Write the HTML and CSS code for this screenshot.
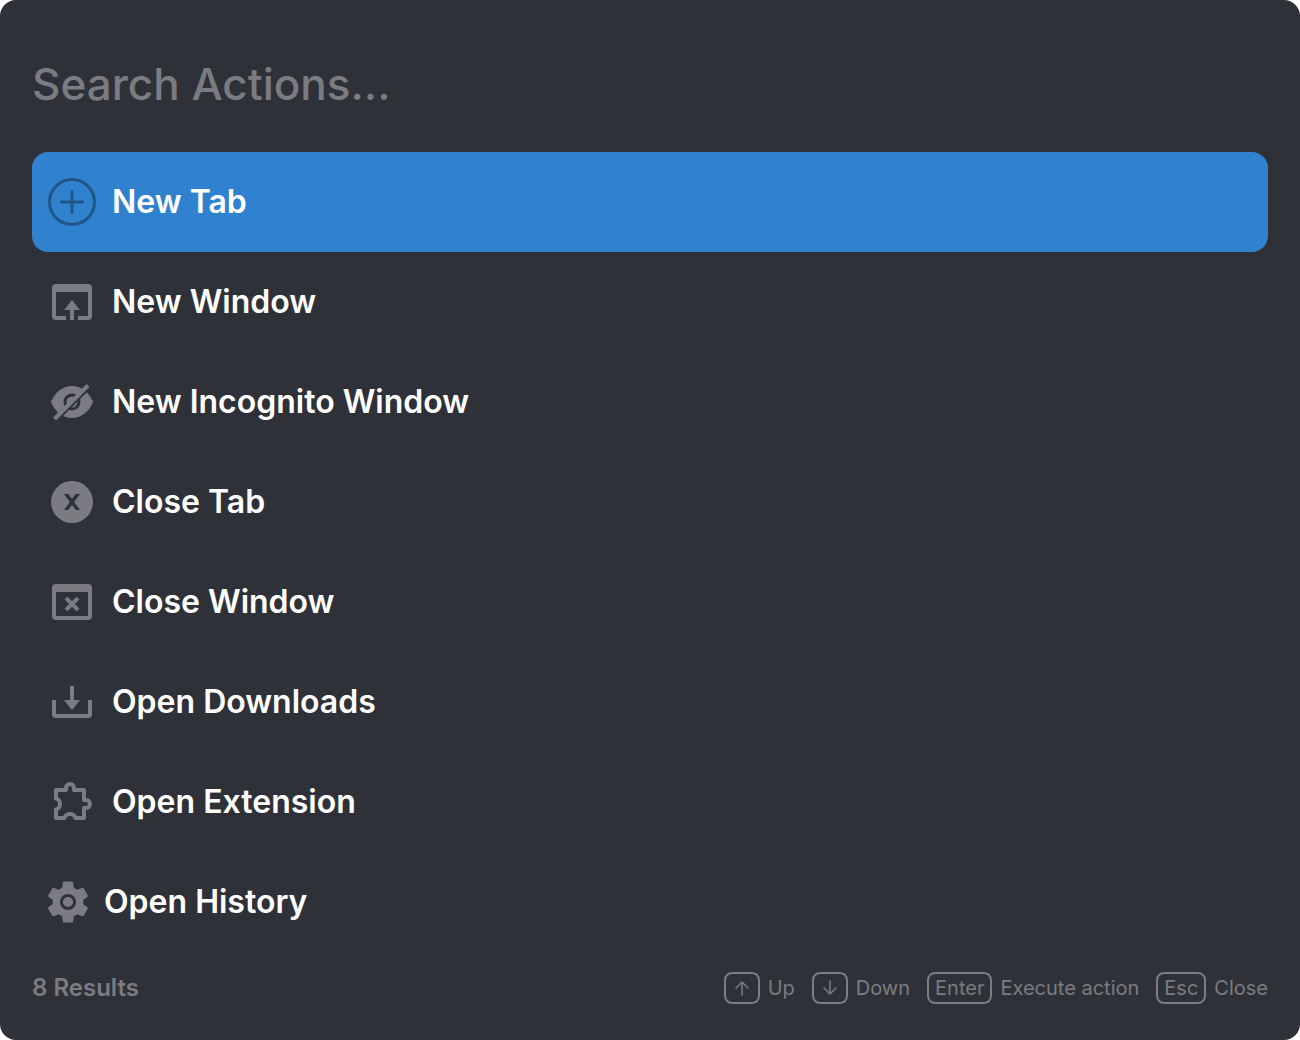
FILE: index.html
```html
<!DOCTYPE html>
<html lang="en">
<head>
<meta charset="utf-8">
<title>Search Actions</title>
<link rel="stylesheet" href="styles.css">
</head>
<body>
<main class="palette">
  <input class="search" type="text" placeholder="Search Actions..." aria-label="Search actions">
  <ul class="actions">
    <li><button class="action selected" type="button">
      <svg class="icon" viewBox="0 0 48 48" fill="none" stroke="currentColor" stroke-width="3" stroke-linecap="round"><circle cx="24" cy="24" r="22.5"/><path d="M24 13.5v21M13.5 24h21"/></svg>
      <span>New Tab</span></button></li>
    <li><button class="action" type="button">
      <svg class="icon" viewBox="0 0 48 48" fill="currentColor"><path d="M8 6h32a4 4 0 0 1 4 4v28a4 4 0 0 1-4 4H30v-4h10V14H8v24h10v4H8a4 4 0 0 1-4-4V10a4 4 0 0 1 4-4zM24 22l8 10h-6v10h-4V32h-6z"/></svg>
      <span>New Window</span></button></li>
    <li><button class="action" type="button">
      <svg class="icon" viewBox="0 0 48 48" fill="none"><path fill="currentColor" d="M3 24C7 14 15 8 24 8s17 6 21 16c-4 10-12 16-21 16S7 34 3 24z"/><circle class="cut" cx="24" cy="24" r="7" stroke-width="3"/><path class="cut" stroke-width="3" d="M43 8L8 43"/><path stroke="currentColor" stroke-width="4" d="M40 7.500L6.500 41"/></svg>
      <span>New Incognito Window</span></button></li>
    <li><button class="action" type="button">
      <svg class="icon" viewBox="0 0 48 48" fill="none"><circle cx="24" cy="24" r="21" fill="currentColor"/><path class="hole" d="M16 16h4.300L24 21l3.700-5H32l-5.800 8L32 32h-4.300L24 27l-3.700 5H16l5.800-8z"/></svg>
      <span>Close Tab</span></button></li>
    <li><button class="action" type="button">
      <svg class="icon" viewBox="0 0 48 48" fill="currentColor"><path fill-rule="evenodd" d="M8 6h32a4 4 0 0 1 4 4v28a4 4 0 0 1-4 4H8a4 4 0 0 1-4-4V10a4 4 0 0 1 4-4zM8 14v24h32V14z"/><path stroke="currentColor" stroke-width="4" d="M18 20l12 12M30 20L18 32"/></svg>
      <span>Close Window</span></button></li>
    <li><button class="action" type="button">
      <svg class="icon" viewBox="0 0 48 48" fill="currentColor"><path d="M4 22h4v14h32V22h4v14a4 4 0 0 1-4 4H8a4 4 0 0 1-4-4zM22 8h4v14h6l-8 10-8-10h6z"/></svg>
      <span>Open Downloads</span></button></li>
    <li><button class="action" type="button">
      <svg class="icon" viewBox="0 0 48 48" fill="none" stroke="currentColor" stroke-width="4" stroke-linejoin="round"><path d="M8 12H18V10a4 4 0 0 1 8 0V12H36V22H38a4 4 0 0 1 0 8H36V40H27.500C27 37.500 24.500 36 22 36S17 37.500 16.500 40H8V31.500C10.500 31 12 28.500 12 26S10.500 21 8 20.500z"/></svg>
      <span>Open Extension</span></button></li>
    <li><button class="action" type="button">
      <svg class="icon icon-narrow" viewBox="2.600 2.400 18.800 19.200"><path fill="currentColor" d="M19.140 12.940c.04-.3.06-.61.06-.94 0-.32-.02-.64-.07-.94l2.030-1.580c.18-.14.23-.41.12-.61l-1.920-3.320c-.12-.22-.37-.29-.59-.22l-2.390.96c-.5-.38-1.030-.7-1.620-.94L14.400 2.810c-.04-.24-.24-.41-.48-.41h-3.840c-.24 0-.43.17-.47.41L9.250 5.350C8.660 5.590 8.120 5.920 7.630 6.290L5.240 5.330c-.22-.08-.47 0-.59.22L2.740 8.870c-.12.21-.08.47.12.61l2.030 1.580C4.840 11.360 4.800 11.690 4.800 12s.02.64.07.94l-2.030 1.580c-.18.14-.23.41-.12.61l1.920 3.320c.12.22.37.29.59.22l2.390-.96c.5.38 1.030.7 1.620.94l.36 2.540c.05.24.24.41.48.41h3.840c.24 0 .44-.17.47-.41l.36-2.540c.59-.24 1.130-.56 1.620-.94l2.390.96c.22.08.47 0 .59-.22l1.920-3.320c.12-.22.07-.47-.12-.61z"/><circle class="cut" fill="none" cx="12" cy="12" r="3.100" stroke-width="1.400"/></svg>
      <span>Open History</span></button></li>
  </ul>
  <footer class="footer">
    <span class="count">8 Results</span>
    <div class="hints">
      <span class="hint"><kbd><svg class="arrow" viewBox="0 0 20 20"><path d="M10 17V4M4 10l6-6 6 6"/></svg></kbd>Up</span>
      <span class="hint"><kbd><svg class="arrow" viewBox="0 0 20 20"><path d="M10 3v13M4 10l6 6 6-6"/></svg></kbd>Down</span>
      <span class="hint"><kbd>Enter</kbd>Execute action</span>
      <span class="hint"><kbd>Esc</kbd>Close</span>
    </div>
  </footer>
</main>
</body>
</html>
```
FILE: styles.css
```css
* { box-sizing: border-box; }
body { margin: 0; background: #fff; font-family: Inter, "Liberation Sans", sans-serif; }
.palette { min-height: 100vh; padding: 32px; display: flex; flex-direction: column; background: #2f3139; border-radius: 16px; color: #7b7c81; }
.search { width: 100%; height: 104px; margin-bottom: 16px; padding: 0; border: 0; outline: 0; background: transparent; color: #fff; font: 500 44px Inter, "Liberation Sans", sans-serif; }
.search::placeholder { color: #7b7c81; opacity: 1; }
.actions { margin: 0; padding: 0; list-style: none; }
.action { display: flex; align-items: center; gap: 16px; width: 100%; height: 100px; padding: 0 16px; border: 0; border-radius: 16px; background: transparent; color: #7b7c81; font: 600 32px/40px Inter, "Liberation Sans", sans-serif; text-align: left; }
.action span { color: #fff; }
.selected { background: #3182ce; color: #1f5688; }
.icon { flex: none; width: 48px; height: 48px; }
.icon-narrow { width: 40px; height: 42px; }
.cut { stroke: #2f3139; }
.hole { fill: #2f3139; }
.footer { display: flex; align-items: center; justify-content: space-between; margin-top: 16px; }
.count { font-size: 24px; line-height: 40px; font-weight: 600; }
.hints { display: flex; gap: 17px; }
.hint { display: flex; align-items: center; gap: 8px; font-size: 20px; line-height: 28px; }
kbd { display: flex; align-items: center; height: 32px; padding: 0 6px; border: 2px solid #7b7c81; border-radius: 8px; font: inherit; }
.arrow { width: 20px; height: 20px; fill: none; stroke: currentColor; stroke-width: 1.500; stroke-linecap: round; stroke-linejoin: round; }
```
